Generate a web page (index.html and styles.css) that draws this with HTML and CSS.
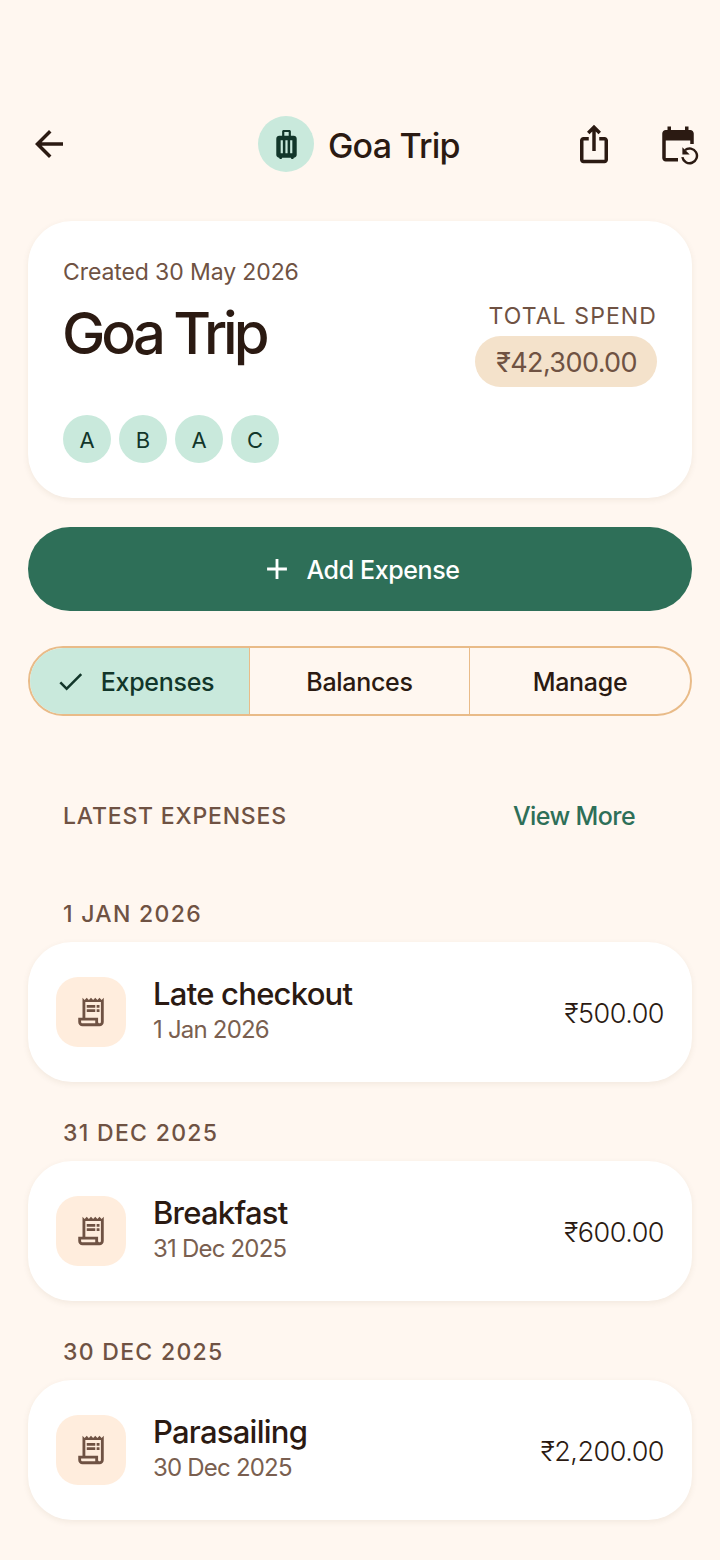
FILE: index.html
```html
<!DOCTYPE html>
<html lang="en">
<head>
    <meta charset="UTF-8" />
    <meta name="viewport" content="width=device-width, initial-scale=1" />
    <title>Goa Trip</title>
    <link rel="stylesheet" href="styles.css">
</head>
<body>

    <!-- Top bar -->
    <header class="top-bar">
        <svg class="bar-icon" viewBox="0 0 24 24" fill="#2b1a12">
            <path d="M20 11H7.830l5.590-5.590L12 4l-8 8 8 8 1.410-1.410L7.830 13H20v-2z"/>
        </svg>
        <div class="top-title">
            <div class="trip-badge">
                <svg viewBox="0 0 24 24" width="35" height="35" fill="#12362a">
                    <path d="M17 6h-2V3c0-.55-.45-1-1-1h-4c-.55 0-1 .45-1 1v3H7c-1.100 0-2 .9-2 2v11c0 1.100.9 2 2 2 0 .55.45 1 1 1s1-.45 1-1h6c0 .55.45 1 1 1s1-.45 1-1c1.100 0 2-.9 2-2V8c0-1.100-.9-2-2-2zM9.500 18H8V9h1.500v9zm3.250 0h-1.500V9h1.500v9zm.750-12h-3V3.500h3V6zM16 18h-1.500V9H16v9z"/>
                </svg>
            </div>
            <span class="top-name">Goa Trip</span>
        </div>
        <div class="top-actions">
            <svg class="bar-icon" viewBox="0 0 24 24" fill="#2b1a12">
                <path d="M16 5l-1.420 1.420-1.590-1.590V16h-1.980V4.830L9.420 6.420 8 5l4-4 4 4zm4 5v11c0 1.100-.9 2-2 2H6c-1.110 0-2-.9-2-2V10c0-1.110.89-2 2-2h3v2H6v11h12V10h-3V8h3c1.100 0 2 .89 2 2z"/>
            </svg>
            <svg class="bar-icon" viewBox="0 0 24 24" fill="#2b1a12">
                <path d="M21 12V6c0-1.100-.9-2-2-2h-1V2h-2v2H8V2H6v2H5c-1.100 0-2 .9-2 2v14c0 1.100.9 2 2 2h7v-2H5V10h14v2h2z"/>
                <path fill="none" stroke="#2b1a12" stroke-width="1.400" d="M16 15.500a4.200 4.200 0 1 1-1.500 4"/>
                <path d="M14.500 13.800v4.200h4.200z"/>
            </svg>
        </div>
    </header>

    <!-- Trip summary -->
    <section class="summary-card">
        <div class="created">Created 30 May 2026</div>
        <div class="summary-row">
            <h1 class="trip-name">Goa Trip</h1>
            <div class="spend">
                <div class="spend-label">TOTAL SPEND</div>
                <div class="spend-pill">₹42,300.00</div>
            </div>
        </div>
        <div class="members">
            <span class="member">A</span>
            <span class="member">B</span>
            <span class="member">A</span>
            <span class="member">C</span>
        </div>
    </section>

    <button class="add-btn">
        <svg viewBox="0 0 24 24" width="34" height="34" fill="#fff"><path d="M19 13h-6v6h-2v-6H5v-2h6V5h2v6h6v2z"/></svg>
        <span>Add Expense</span>
    </button>

    <!-- Tabs -->
    <nav class="tabs">
        <div class="tab active">
            <svg viewBox="0 0 24 24" width="31" height="31" fill="#12362a"><path d="M9 16.170 4.830 12l-1.420 1.410L9 19 21 7l-1.410-1.410z"/></svg>
            <span>Expenses</span>
        </div>
        <div class="tab">Balances</div>
        <div class="tab">Manage</div>
    </nav>

    <div class="list-head">
        <span class="list-title">LATEST EXPENSES</span>
        <span class="view-more">View More</span>
    </div>

    <div class="date-label first">1 JAN 2026</div>
    <div class="expense">
        <div class="expense-icon">
            <svg viewBox="0 0 24 24" width="34" height="34" fill="#6f5243">
                <path d="M19.500 3.500 18 2l-1.500 1.500L15 2l-1.500 1.500L12 2l-1.500 1.500L9 2 7.500 3.500 6 2v14H3v3c0 1.660 1.340 3 3 3h12c1.660 0 3-1.340 3-3V2l-1.500 1.500zM15 20H6c-.55 0-1-.45-1-1v-1h10v2zm4-1c0 .55-.45 1-1 1s-1-.45-1-1v-3H8V5h11v14z"/>
                <path d="M9 7h6v2H9zm7 0h2v2h-2zm-7 3h6v2H9zm7 0h2v2h-2z"/>
            </svg>
        </div>
        <div class="expense-text">
            <div class="expense-name">Late checkout</div>
            <div class="expense-date">1 Jan 2026</div>
        </div>
        <div class="expense-amount">₹500.00</div>
    </div>

    <div class="date-label">31 DEC 2025</div>
    <div class="expense">
        <div class="expense-icon">
            <svg viewBox="0 0 24 24" width="34" height="34" fill="#6f5243">
                <path d="M19.500 3.500 18 2l-1.500 1.500L15 2l-1.500 1.500L12 2l-1.500 1.500L9 2 7.500 3.500 6 2v14H3v3c0 1.660 1.340 3 3 3h12c1.660 0 3-1.340 3-3V2l-1.500 1.500zM15 20H6c-.55 0-1-.45-1-1v-1h10v2zm4-1c0 .55-.45 1-1 1s-1-.45-1-1v-3H8V5h11v14z"/>
                <path d="M9 7h6v2H9zm7 0h2v2h-2zm-7 3h6v2H9zm7 0h2v2h-2z"/>
            </svg>
        </div>
        <div class="expense-text">
            <div class="expense-name">Breakfast</div>
            <div class="expense-date">31 Dec 2025</div>
        </div>
        <div class="expense-amount">₹600.00</div>
    </div>

    <div class="date-label">30 DEC 2025</div>
    <div class="expense">
        <div class="expense-icon">
            <svg viewBox="0 0 24 24" width="34" height="34" fill="#6f5243">
                <path d="M19.500 3.500 18 2l-1.500 1.500L15 2l-1.500 1.500L12 2l-1.500 1.500L9 2 7.500 3.500 6 2v14H3v3c0 1.660 1.340 3 3 3h12c1.660 0 3-1.340 3-3V2l-1.500 1.500zM15 20H6c-.55 0-1-.45-1-1v-1h10v2zm4-1c0 .55-.45 1-1 1s-1-.45-1-1v-3H8V5h11v14z"/>
                <path d="M9 7h6v2H9zm7 0h2v2h-2zm-7 3h6v2H9zm7 0h2v2h-2z"/>
            </svg>
        </div>
        <div class="expense-text">
            <div class="expense-name">Parasailing</div>
            <div class="expense-date">30 Dec 2025</div>
        </div>
        <div class="expense-amount">₹2,200.00</div>
    </div>

</body>
</html>
```

FILE: styles.css
```css
html, body {
    overflow: hidden;
}

body {
    margin: 0;
    padding: 116px 28px 0;
    height: 1560px;
    box-sizing: border-box;
    background-color: #fff7f0;
    font-family: Inter, "Open Sans", sans-serif;
    color: #2b1a12;
}

/* Top bar */
.top-bar {
    display: flex;
    align-items: center;
    height: 56px;
}

.bar-icon {
    width: 42px;
    height: 42px;
}

.top-title {
    display: flex;
    align-items: center;
    gap: 14px;
    margin-left: 188px;
}

.trip-badge {
    width: 56px;
    height: 56px;
    border-radius: 50%;
    background: #c9e9dc;
    display: flex;
    align-items: center;
    justify-content: center;
}

.top-name {
    font-size: 34px;
    letter-spacing: -0.800px;
    font-weight: 500;
    padding-top: 2px;
}

.top-actions {
    display: flex;
    align-items: center;
    gap: 42px;
    margin-left: auto;
    margin-right: -7px;
}

/* Summary */
.summary-card {
    margin-top: 49px;
    height: 277px;
    box-sizing: border-box;
    padding: 36px 35px;
    background: #fff;
    border-radius: 44px;
    box-shadow: 0 2px 6px rgba(90, 60, 30, 0.08);
}

.created {
    font-size: 23px;
    line-height: 30px;
    letter-spacing: -0.100px;
    color: #6f5243;
}

.summary-row {
    display: flex;
    justify-content: space-between;
    align-items: flex-start;
}

.trip-name {
    margin: 11px 0 0 -1px;
    font-size: 58px;
    line-height: 70px;
    font-weight: 500;
    letter-spacing: -4px;
}

.spend {
    display: flex;
    flex-direction: column;
    align-items: flex-end;
}

.spend-label {
    margin-top: 14px;
    font-size: 23px;
    line-height: 30px;
    letter-spacing: 1.100px;
    color: #6f5243;
}

.spend-pill {
    margin-top: 5px;
    height: 51px;
    line-height: 53px;
    padding: 0 20px 0 21px;
    border-radius: 26px;
    background: #f4e2cb;
    font-size: 27px;
    letter-spacing: -0.600px;
    color: #6f5243;
}

.members {
    display: flex;
    gap: 8px;
    margin-top: 28px;
}

.member {
    width: 48px;
    height: 48px;
    border-radius: 50%;
    background: #c9e9dc;
    color: #12362a;
    font-size: 22px;
    line-height: 50px;
    text-align: center;
}

/* Add button */
.add-btn {
    display: flex;
    align-items: center;
    justify-content: center;
    gap: 12px;
    width: 100%;
    height: 84px;
    margin-top: 29px;
    padding: 0;
    border: none;
    border-radius: 42px;
    background: #2e6f58;
    color: #fff;
    font-family: inherit;
    font-size: 25px;
    font-weight: 500;
    letter-spacing: -0.400px;
}

.add-btn span {
    padding-top: 2px;
}

/* Tabs */
.tabs {
    display: grid;
    grid-template-columns: 1fr 1fr 1fr;
    height: 70px;
    box-sizing: border-box;
    margin-top: 35px;
    border: 2px solid #e9bb88;
    border-radius: 35px;
    overflow: hidden;
}

.tab {
    display: flex;
    align-items: center;
    justify-content: center;
    gap: 15px;
    padding-top: 2px;
    font-size: 25px;
    font-weight: 500;
    letter-spacing: -0.300px;
    border-right: 1px solid #e9bb88;
}

.tab:last-child {
    border-right: none;
}

.tab.active {
    background: #c9e9dc;
    color: #12362a;
    padding-right: 10px;
}

.tab.active svg {
    margin-top: -2px;
}

/* Expense list */
.list-head {
    display: flex;
    justify-content: space-between;
    align-items: center;
    margin-top: 84px;
    padding: 0 57px 0 35px;
    height: 32px;
}

.list-title {
    font-size: 23px;
    letter-spacing: 0.800px;
    font-weight: 500;
    color: #6f5243;
}

.view-more {
    font-size: 25px;
    font-weight: 500;
    letter-spacing: -0.600px;
    color: #2e6f58;
}

.date-label {
    margin-top: 23px;
    padding-left: 35px;
    height: 56px;
    line-height: 56px;
    font-size: 23px;
    font-weight: 500;
    letter-spacing: 1.300px;
    color: #6f5243;
}

.date-label.first {
    margin-top: 54px;
}

.expense {
    display: flex;
    align-items: center;
    height: 140px;
    box-sizing: border-box;
    padding: 0 28px;
    background: #fff;
    border-radius: 44px;
    box-shadow: 0 2px 6px rgba(90, 60, 30, 0.08);
}

.expense-icon {
    width: 70px;
    height: 70px;
    border-radius: 22px;
    background: #ffeddd;
    display: flex;
    align-items: center;
    justify-content: center;
}

.expense-text {
    margin-left: 27px;
    margin-bottom: 5px;
    flex: 1;
}

.expense-name {
    font-size: 31px;
    line-height: 38px;
    font-weight: 500;
    letter-spacing: -0.750px;
}

.expense-date {
    margin-top: 3px;
    font-size: 24px;
    line-height: 28px;
    letter-spacing: -0.800px;
    color: #7a5f50;
}

.expense-amount {
    padding-top: 2px;
    font-size: 27px;
    font-weight: 300;
    letter-spacing: -0.500px;
    color: #2b1a12;
}
```
